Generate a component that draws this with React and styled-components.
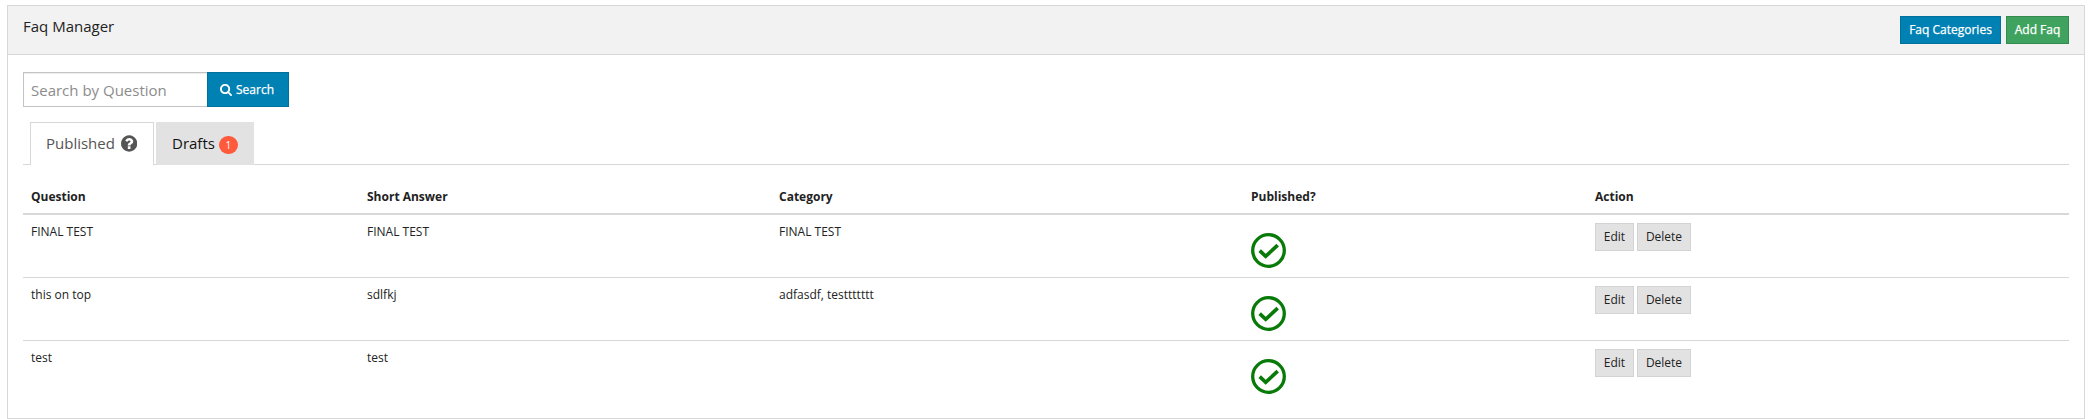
import React from 'react';
import styled, { createGlobalStyle, css } from 'styled-components';

const GlobalStyle = createGlobalStyle`
  *, *::before, *::after { box-sizing: border-box; }
  body {
    margin: 0;
    background: #fff;
    color: #222;
    font-family: "Open Sans", "Liberation Sans", sans-serif;
    font-size: 12px;
  }
  button, input { font-family: inherit; }
`;

const Panel = styled.section`
  margin: 5px 4px 0 7px;
  height: 414px;
  border: 1px solid #d8d8d8;
  background: #fff;
`;

const PanelHeader = styled.header`
  display: flex;
  justify-content: space-between;
  align-items: flex-start;
  height: 49px;
  padding: 10px 15px 0;
  background: #f2f2f2;
  border-bottom: 1px solid #d8d8d8;
`;

const Title = styled.h1`
  margin: 0;
  font-size: 15px;
  font-weight: 400;
  line-height: 20px;
`;

const ButtonGroup = styled.div`
  display: flex;
  gap: ${(p) => p.$gap}px;
`;

const tones = {
  primary: css`background: #0081b4; border-color: #00709c; color: #fff; -webkit-text-stroke: 0.25px #fff;`,
  success: css`background: #3fa35f; border-color: #358a50; color: #fff; -webkit-text-stroke: 0.25px #fff;`,
  neutral: css`background: #e2e2e2; border-color: #d3d3d3; color: #222;`,
};

const Button = styled.button`
  display: inline-flex;
  align-items: center;
  justify-content: center;
  width: ${(p) => p.$width}px;
  height: 28px;
  padding: 0;
  border: 1px solid;
  font-size: 12px;
  line-height: 18px;
  white-space: nowrap;
  ${(p) => tones[p.$tone]}
`;

const PanelBody = styled.div`
  padding: 17px 15px 0;
`;

const SearchForm = styled.form`
  display: flex;
`;

const SearchInput = styled.input`
  width: 184px;
  height: 35px;
  padding: 1px 7px 0;
  border: 1px solid #c3c3c3;
  border-right: 0;
  border-radius: 0;
  box-shadow: inset 0 1px 1px rgba(0, 0, 0, 0.075);
  font-size: 15px;
  outline: none;
  &::placeholder { color: #8c8c8c; opacity: 1; }
`;

const SearchButton = styled(Button)`
  height: 35px;
  gap: 4px;
  padding-right: 2px;
`;

const Tabs = styled.nav`
  display: flex;
  gap: 2px;
  height: 43px;
  margin-top: 15px;
  padding-left: 7px;
  border-bottom: 1px solid #d8d8d8;
`;

const Tab = styled.a`
  display: flex;
  align-items: center;
  height: 43px;
  width: ${(p) => p.$width}px;
  padding: 0 0 ${(p) => (p.$active ? 2 : 1)}px ${(p) => (p.$active ? 15 : 16)}px;
  font-size: 15px;
  color: ${(p) => (p.$active ? '#555' : '#111')};
  background: ${(p) => (p.$active ? '#fff' : '#e2e2e2')};
  ${(p) => p.$active && css`
    border: 1px solid #d8d8d8;
    border-bottom: 0;
  `}
`;

const Badge = styled.span`
  display: inline-flex;
  align-items: center;
  justify-content: center;
  width: 19px;
  height: 18px;
  margin: 3px 0 0 4px;
  border-radius: 9px;
  background: #ff5a3c;
  color: #fff;
  font-size: 10px;
  line-height: 18px;
`;

const Table = styled.table`
  width: 100%;
  table-layout: fixed;
  border-collapse: separate;
  border-spacing: 0;
`;

const HeadCell = styled.th`
  width: ${(p) => (p.$width ? `${p.$width}px` : 'auto')};
  height: 50px;
  padding: 15px 8px 0;
  border-bottom: 2px solid #d8d8d8;
  text-align: left;
  vertical-align: middle;
  line-height: 18px;
  font-weight: 700;
`;

const Row = styled.tr`
  & + & td { border-top: 1px solid #d8d8d8; }
  &:not(:first-child) td { height: 63px; }
`;

const Cell = styled.td`
  height: 62px;
  padding: 8px 8px 0;
  vertical-align: top;
  line-height: 18px;
`;

const Glyph = styled.svg`
  display: block;
  flex: none;
  fill: currentColor;
  margin: ${(p) => p.$margin || 0};
`;

const StatusGlyph = styled.svg`
  display: block;
  margin-top: 10px;
  fill: none;
  stroke: #087a08;
`;

const SearchIcon = () => (
  <Glyph width="12" height="13" viewBox="0 0 1664 1792" $margin="0 0 1px">
    <path d="M1152 832q0-185-131.5-316.5T704 384 387.5 515.5 256 832t131.5 316.5T704 1280t316.5-131.5T1152 832zm512 832q0 52-38 90t-90 38q-54 0-90-38l-343-342q-179 124-399 124-143 0-273.5-55.5t-225-150-150-225T0 832t55.5-273.5 150-225 225-150T704 128t273.500 55.500 225 150 150 225T1408 832q0 220-124 399l343 343q37 37 37 90z" />
  </Glyph>
);

const HelpIcon = () => (
  <Glyph width="16.3" height="19" viewBox="0 0 1536 1792" $margin="0 0 0 6px">
    <path d="M896 1376v-192q0-14-9-23t-23-9H672q-14 0-23 9t-9 23v192q0 14 9 23t23 9h192q14 0 23-9t9-23zm256-672q0-88-55.5-163T958 425t-170-41q-243 0-371 213-15 24 8 42l132 100q7 6 19 6 16 0 25-12 53-68 86-92 34-24 86-24 48 0 85.5 26t37.5 59q0 38-20 61t-68 45q-63 28-115.5 86.500T640 1020v36q0 14 9 23t23 9h192q14 0 23-9t9-23q0-19 21.500-49.500t54.500-49.500q32-18 49-28.500t46-35 44.500-48 28-60.500 12.500-81zm384 192q0 209-103 385.500t-279.500 279.500-385.500 103-385.500-103-279.500-279.500-103-385.500 103-385.500 279.500-279.500 385.500-103 385.500 103 279.500 279.500 103 385.500z" />
  </Glyph>
);

const PublishedIcon = () => (
  <StatusGlyph width="35" height="35" viewBox="0 0 35 35">
    <circle cx="17.5" cy="17.5" r="15.8" strokeWidth="3.3" />
    <path d="M8.7 17.7 14.700 23.300 26.700 12.200" strokeWidth="3.7" />
  </StatusGlyph>
);

const columns = [
  { label: 'Question', width: 336 },
  { label: 'Short Answer', width: 412 },
  { label: 'Category', width: 472 },
  { label: 'Published?', width: 344 },
  { label: 'Action' },
];

const faqs = [
  { question: 'FINAL TEST', answer: 'FINAL TEST', category: 'FINAL TEST' },
  { question: 'this on top', answer: 'sdlfkj', category: 'adfasdf, testtttttt' },
  { question: 'test', answer: 'test', category: '' },
];

export default function App() {
  return (
    <>
      <GlobalStyle />
      <Panel>
        <PanelHeader>
          <Title>Faq Manager</Title>
          <ButtonGroup $gap={5}>
            <Button $tone="primary" $width={101}>Faq Categories</Button>
            <Button $tone="success" $width={63}>Add Faq</Button>
          </ButtonGroup>
        </PanelHeader>
        <PanelBody>
          <SearchForm>
            <SearchInput placeholder="Search by Question" />
            <SearchButton type="button" $tone="primary" $width={82}>
              <SearchIcon />
              Search
            </SearchButton>
          </SearchForm>
          <Tabs>
            <Tab $active $width={124}>Published<HelpIcon /></Tab>
            <Tab $width={98}>Drafts<Badge>1</Badge></Tab>
          </Tabs>
          <Table>
            <thead>
              <tr>
                {columns.map((c) => (
                  <HeadCell key={c.label} $width={c.width}>{c.label}</HeadCell>
                ))}
              </tr>
            </thead>
            <tbody>
              {faqs.map((f) => (
                <Row key={f.question}>
                  <Cell>{f.question}</Cell>
                  <Cell>{f.answer}</Cell>
                  <Cell>{f.category}</Cell>
                  <Cell><PublishedIcon /></Cell>
                  <Cell>
                    <ButtonGroup $gap={3}>
                      <Button $tone="neutral" $width={39}>Edit</Button>
                      <Button $tone="neutral" $width={54}>Delete</Button>
                    </ButtonGroup>
                  </Cell>
                </Row>
              ))}
            </tbody>
          </Table>
        </PanelBody>
      </Panel>
    </>
  );
}
